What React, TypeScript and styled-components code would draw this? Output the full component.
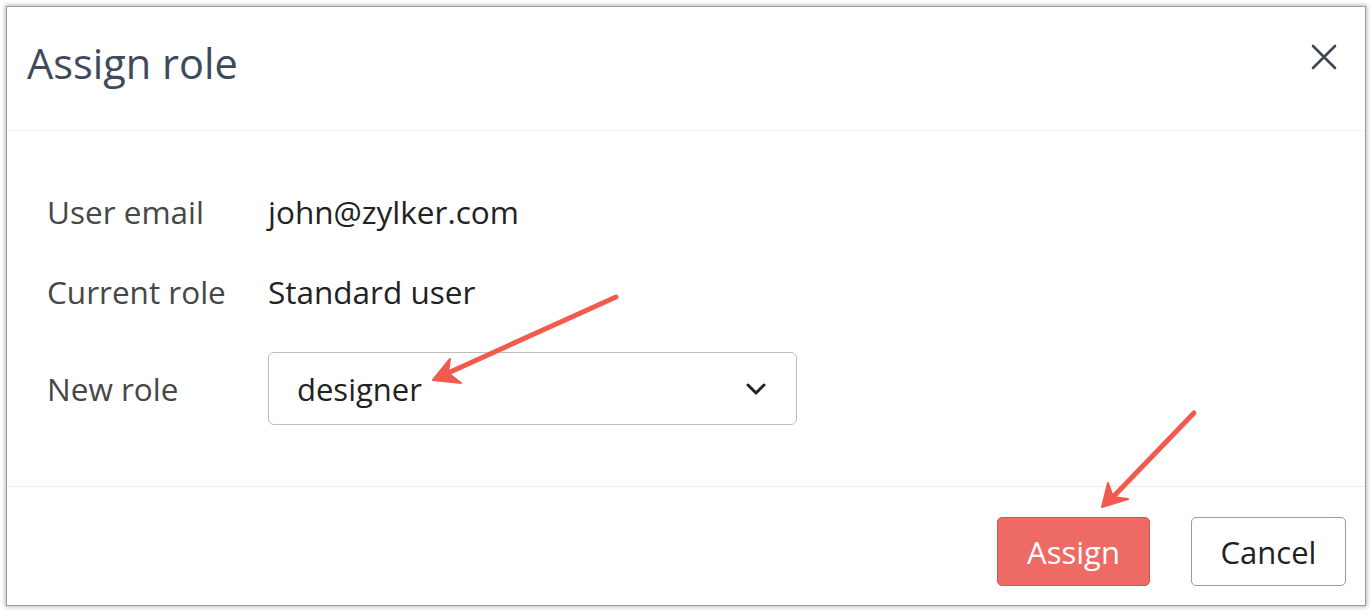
import React from "react";
import styled, { createGlobalStyle } from "styled-components";

const Global = createGlobalStyle`
  html, body { margin: 0; padding: 0; background: #ffffff; }
  body { font-family: "Open Sans", "Noto Sans", sans-serif; }
  * { box-sizing: border-box; }
`;

const Page = styled.div`
  position: relative;
  width: 1372px;
  height: 612px;
  padding: 6px;
`;

const Dialog = styled.div`
  width: 1360px;
  height: 600px;
  background: #fff;
  border: 1px solid #9c9c9c;
  box-shadow: 0 0 4px 1px rgba(0, 0, 0, 0.28);
  display: flex;
  flex-direction: column;
`;

const Header = styled.div`
  height: 124px;
  border-bottom: 1px solid #edf1f5;
  display: flex;
  align-items: flex-start;
  justify-content: space-between;
  padding: 0 28px 0 20px;
`;

const Title = styled.h1`
  margin: 28px 0 0;
  font-size: 41.5px;
  line-height: 56px;
  font-weight: 400;
  color: #3e4a5c;
`;

const CloseButton = styled.button`
  margin-top: 37px;
  width: 26px;
  height: 26px;
  padding: 0;
  border: none;
  background: transparent;
  display: flex;
  align-items: center;
  justify-content: center;
  cursor: pointer;
`;

const Body = styled.div`
  height: 356px;
  border-bottom: 1px solid #ececec;
  padding: 61px 40px 0;
  display: grid;
  grid-template-columns: 221px 529px;
  grid-auto-rows: min-content;
  row-gap: 40px;
  align-items: center;
`;

const Label = styled.div`
  font-size: 31.5px;
  line-height: 40px;
  color: #474747;
`;

const Value = styled.div`
  font-size: 31.5px;
  line-height: 40px;
  color: #222;
`;

const Select = styled.div`
  height: 73px;
  border: 1.5px solid #bdbdbd;
  border-radius: 6px;
  display: flex;
  align-items: center;
  justify-content: space-between;
  padding: 0 30px 0 28px;
  font-size: 31px;
  color: #222;
`;

const Footer = styled.div`
  flex: 1;
  display: flex;
  justify-content: flex-end;
  align-items: flex-start;
  padding: 30px 19px 0 0;
  gap: 41px;
`;

const Button = styled.button<{ $primary?: boolean }>`
  height: 69px;
  width: ${(p) => (p.$primary ? "153px" : "155px")};
  border-radius: 5px;
  font-family: "Open Sans", sans-serif;
  font-size: 31px;
  border: 1.5px solid ${(p) => (p.$primary ? "#de534d" : "#8d9db2")};
  background: ${(p) => (p.$primary ? "#ee6a65" : "#fff")};
  color: ${(p) => (p.$primary ? "#fff" : "#222")};
  padding: 0;
  cursor: pointer;
`;

const Overlay = styled.svg`
  position: absolute;
  left: 0;
  top: 0;
  pointer-events: none;
`;

const RED = "#f35a4e";

export default function App() {
  return (
    <Page>
      <Global />
      <Dialog>
        <Header>
          <Title>Assign role</Title>
          <CloseButton aria-label="Close">
            <svg width="26" height="26" viewBox="0 0 26 26">
              <path d="M2 2 L24 24 M24 2 L2 24" stroke="#3d4656" strokeWidth="2.6" strokeLinecap="round" />
            </svg>
          </CloseButton>
        </Header>
        <Body>
          <Label>User email</Label>
          <Value>john@zylker.com</Value>
          <Label>Current role</Label>
          <Value>Standard user</Value>
          <Label>New role</Label>
          <Select>
            <span>designer</span>
            <svg width="20" height="12" viewBox="0 0 20 12">
              <path d="M2 2 L10 10 L18 2" stroke="#222" strokeWidth="3" fill="none" strokeLinecap="round" strokeLinejoin="round" />
            </svg>
          </Select>
        </Body>
        <Footer>
          <Button $primary>Assign</Button>
          <Button>Cancel</Button>
        </Footer>
      </Dialog>
      <Overlay width="1372" height="612" viewBox="0 0 1372 612">
        <path d="M616 297 L448 373" stroke={RED} strokeWidth="5" strokeLinecap="round" fill="none" />
        <path d="M433 380 L450 359 L448 373 L461 383 Z" fill={RED} stroke={RED} strokeWidth="2" strokeLinejoin="round" />
        <path d="M1194 413 L1113 497" stroke={RED} strokeWidth="5" strokeLinecap="round" fill="none" />
        <path d="M1102 507 L1108 483 L1113 497 L1128 499 Z" fill={RED} stroke={RED} strokeWidth="2" strokeLinejoin="round" />
      </Overlay>
    </Page>
  );
}
